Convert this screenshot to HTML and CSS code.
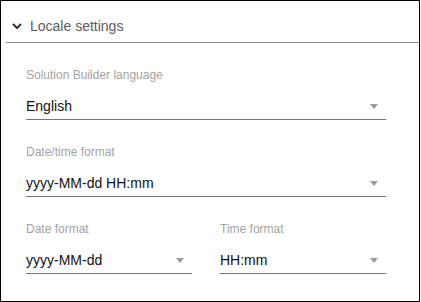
FILE: index.html
```html
<!DOCTYPE html>
<html>
<head>
<meta charset="utf-8">
<link rel="stylesheet" href="styles.css">
</head>
<body>
<div class="panel">
  <div class="panel-header">
    <svg class="chevron" width="10" height="6" viewBox="0 0 10 6"><polyline points="1,1 5,5 9,1" fill="none" stroke="#333" stroke-width="2"/></svg>
    <span class="panel-title">Locale settings</span>
  </div>
  <div class="panel-body">
    <div class="field">
      <div class="field-label">Solution Builder language</div>
      <div class="select"><span class="select-value">English</span><span class="arrow"></span></div>
    </div>
    <div class="field">
      <div class="field-label">Date/time format</div>
      <div class="select"><span class="select-value">yyyy-MM-dd HH:mm</span><span class="arrow"></span></div>
    </div>
    <div class="field-row">
      <div class="field">
        <div class="field-label">Date format</div>
        <div class="select"><span class="select-value">yyyy-MM-dd</span><span class="arrow"></span></div>
      </div>
      <div class="field">
        <div class="field-label">Time format</div>
        <div class="select"><span class="select-value">HH:mm</span><span class="arrow"></span></div>
      </div>
    </div>
  </div>
</div>
</body>
</html>
```
FILE: styles.css
```css
html, body {
  margin: 0;
  padding: 0;
  background: #fff;
}
body {
  font-family: "Liberation Sans", Arial, sans-serif;
}
.panel {
  width: 420px;
  height: 302px;
  box-sizing: border-box;
  border: 1px solid #000;
  background: #fff;
}
.panel-header {
  display: flex;
  align-items: center;
  margin-left: 5px;
  padding: 17px 0 8px 6px;
  border-bottom: 1px solid #888;
}
.chevron {
  display: block;
  margin-right: 8px;
  margin-top: -1px;
}
.panel-title {
  font-size: 14px;
  line-height: 16px;
  color: #5c5c5c;
}
.panel-body {
  padding: 25px 33px 0 25px;
}
.field {
  margin-bottom: 25px;
}
.field-label {
  font-size: 12px;
  line-height: 14px;
  color: #a3a3a3;
}
.select {
  display: flex;
  align-items: center;
  justify-content: space-between;
  margin-top: 16px;
  padding-bottom: 5px;
  border-bottom: 1px solid #777;
}
.select-value {
  font-size: 14px;
  line-height: 16px;
  color: #111;
}
.arrow {
  width: 0;
  height: 0;
  margin-right: 8px;
  border-left: 4.5px solid transparent;
  border-right: 4.5px solid transparent;
  border-top: 5px solid #9a9a9a;
}
.field-row {
  display: grid;
  grid-template-columns: 166px 166px;
  column-gap: 28px;
}
```
